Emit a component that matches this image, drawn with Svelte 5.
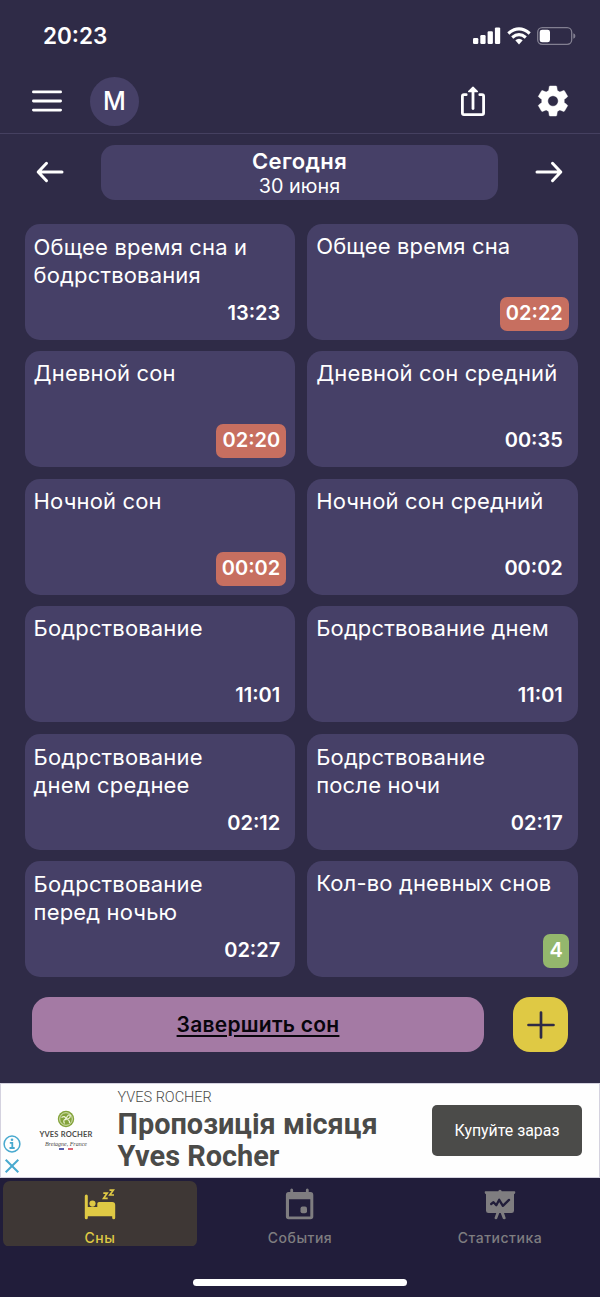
<!-- Daily sleep summary: date switcher, stat cards, actions, ad banner and tab bar. -->
<script lang="ts">
  type Stat = { label: string; value: string; tone?: "bad" | "good" };

  const stats: Stat[] = [
    { label: "Общее время сна и\nбодрствования", value: "13:23" },
    { label: "Общее время сна", value: "02:22", tone: "bad" },
    { label: "Дневной сон", value: "02:20", tone: "bad" },
    { label: "Дневной сон средний", value: "00:35" },
    { label: "Ночной сон", value: "00:02", tone: "bad" },
    { label: "Ночной сон средний", value: "00:02" },
    { label: "Бодрствование", value: "11:01" },
    { label: "Бодрствование днем", value: "11:01" },
    { label: "Бодрствование\nднем среднее", value: "02:12" },
    { label: "Бодрствование\nпосле ночи", value: "02:17" },
    { label: "Бодрствование\nперед ночью", value: "02:27" },
    { label: "Кол-во дневных снов", value: "4", tone: "good" },
  ];

  const tabs = [
    { id: "sleep", label: "Сны" },
    { id: "events", label: "События" },
    { id: "stats", label: "Статистика" },
  ];

  let active = $state("sleep");
</script>

<div class="screen">
  <div class="status">
    <span class="clock">20:23</span>
    <div class="indicators">
      <svg width="28" height="18" viewBox="0 0 28 18" fill="#fff">
        <rect x="0" y="11" width="5.3" height="6" rx="1.2" />
        <rect x="7.3" y="8" width="5.3" height="9" rx="1.2" />
        <rect x="14.6" y="4.3" width="5.3" height="12.7" rx="1.2" />
        <rect x="21.9" y="0.4" width="5.3" height="16.6" rx="1.2" />
      </svg>
      <svg class="wifi" width="24" height="18" viewBox="0 0 24 18" fill="none" stroke="#fff" stroke-width="3.2">
        <path d="M1.3 6.4Q12-2.5 22.7 6.4" />
        <path d="M5.2 10.5Q12 4.8 18.8 10.5" />
        <path d="M8.3 13.3Q12 10.3 15.7 13.3L12 17.4Z" fill="#fff" stroke="none" />
      </svg>
      <svg class="battery" width="39" height="18" viewBox="0 0 39 18">
        <rect x="0.7" y="0.7" width="34" height="16.6" rx="4.5" fill="none" stroke="#827f91" stroke-width="1.3" />
        <rect x="2.7" y="2.7" width="10.3" height="12.6" rx="2.4" fill="#fff" />
        <path d="M36.3 6.2Q38.4 7 38.4 9T36.3 11.8Z" fill="#827f91" />
      </svg>
    </div>
  </div>

  <header>
    <button class="icon menu" aria-label="Меню">
      <svg width="30" height="22" viewBox="0 0 30 22" stroke="#fff" stroke-width="2.8" stroke-linecap="round">
        <path d="M1.4 1.9H28.6M1.4 11H28.6M1.4 20.1H28.6" />
      </svg>
    </button>
    <div class="avatar">М</div>
    <button class="icon share" aria-label="Поделиться">
      <svg width="26" height="32" viewBox="0 0 26 32" fill="none" stroke="#fff" stroke-width="2.8" stroke-linecap="round" stroke-linejoin="round">
        <path d="M6.2 9.7H4Q2.4 9.7 2.4 11.3V28Q2.4 29.6 4 29.6H22Q23.6 29.6 23.6 28V11.3Q23.6 9.7 22 9.7H19.8" />
        <path d="M13 23.5V4" />
        <path d="M13 2.2 17.3 6.5H8.7Z" fill="#fff" stroke-width="1.5" />
      </svg>
    </button>
    <button class="icon gear" aria-label="Настройки">
      <svg width="36" height="36" viewBox="0 0 24 24" fill="#fff" stroke="#fff" stroke-width="0.3" stroke-linejoin="round">
        <path d="M12 15.5A3.5 3.5 0 0 1 8.5 12A3.5 3.5 0 0 1 12 8.5A3.5 3.5 0 0 1 15.5 12A3.5 3.5 0 0 1 12 15.5M19.43 12.97C19.47 12.65 19.5 12.33 19.5 12C19.5 11.67 19.47 11.34 19.43 11L21.54 9.37C21.73 9.22 21.78 8.95 21.66 8.73L19.66 5.27C19.54 5.05 19.27 4.96 19.05 5.05L16.56 6.05C16.04 5.66 15.5 5.32 14.87 5.07L14.5 2.42C14.46 2.18 14.25 2 14 2H10C9.75 2 9.54 2.18 9.5 2.42L9.13 5.07C8.5 5.32 7.96 5.66 7.44 6.05L4.95 5.05C4.73 4.96 4.46 5.05 4.34 5.27L2.34 8.73C2.21 8.95 2.27 9.22 2.46 9.37L4.57 11C4.53 11.34 4.5 11.67 4.5 12C4.5 12.33 4.53 12.65 4.57 12.97L2.46 14.63C2.27 14.78 2.21 15.05 2.34 15.27L4.34 18.73C4.46 18.95 4.73 19.03 4.95 18.95L7.44 17.94C7.96 18.34 8.5 18.68 9.13 18.93L9.5 21.58C9.54 21.82 9.75 22 10 22H14C14.25 22 14.46 21.82 14.5 21.58L14.87 18.93C15.5 18.67 16.04 18.34 16.56 17.94L19.05 18.95C19.27 19.03 19.54 18.95 19.66 18.73L21.66 15.27C21.78 15.05 21.73 14.78 21.54 14.63Z" />
      </svg>
    </button>
  </header>

  <div class="dates">
    <button class="icon" aria-label="Предыдущий день">
      <svg width="28" height="22" viewBox="0 0 28 22" fill="none" stroke="#fff" stroke-width="3" stroke-linecap="round" stroke-linejoin="round">
        <path d="M26 11H2.2M10.5 2.3 2.2 11l8.3 8.7" />
      </svg>
    </button>
    <button class="today">
      <strong>Сегодня</strong>
      <span>30 июня</span>
    </button>
    <button class="icon" aria-label="Следующий день">
      <svg width="28" height="22" viewBox="0 0 28 22" fill="none" stroke="#fff" stroke-width="3" stroke-linecap="round" stroke-linejoin="round">
        <path d="M2 11H25.8M17.5 2.3 25.8 11l-8.3 8.7" />
      </svg>
    </button>
  </div>

  <main>
    {#each stats as stat}
      <section class="card" class:tall={stat.label.includes("\n")}>
        <h2>{stat.label}</h2>
        <span class="value {stat.tone ?? ''}">{stat.value}</span>
      </section>
    {/each}
  </main>

  <div class="actions">
    <button class="finish">Завершить сон</button>
    <button class="add" aria-label="Добавить">
      <svg width="28" height="28" viewBox="0 0 28 28" stroke="#2f2b46" stroke-width="2.7" stroke-linecap="round">
        <path d="M14 1.5V26.5M1.5 14H26.5" />
      </svg>
    </button>
  </div>

  <aside>
    <div class="ad-marks">
      <svg width="18" height="18" viewBox="0 0 18 18" fill="none" stroke="#48a9cf">
        <circle cx="9" cy="9" r="7.9" stroke-width="1.5" />
        <path d="M6.8 7.8H9.3V12.8M6.5 13H11.7" stroke-width="1.8" />
        <circle cx="9" cy="4.7" r="1.3" fill="#48a9cf" stroke="none" />
      </svg>
      <svg width="18" height="18" viewBox="0 0 18 18" stroke="#48a9cf" stroke-width="2">
        <path d="M2.7 2.7 15.3 15.3M15.3 2.7 2.7 15.3" />
      </svg>
    </div>
    <div class="brand">
      <svg width="18" height="18" viewBox="0 0 18 18" fill="none">
        <circle cx="9" cy="9" r="8.2" fill="#83a33a" />
        <circle cx="9" cy="9" r="6.3" stroke="#edf2d8" stroke-width="0.8" />
        <path d="M4.5 7.5Q8 5 9 9Q11 3.5 13.3 5.5Q13.5 9 9 9M9 9Q5.5 10 7.5 13.5M9 9Q13 10 12.5 13" stroke="#edf2d8" stroke-width="1.2" />
      </svg>
      <span class="brand-name">YVES ROCHER</span>
      <span class="brand-place">Bretagne, France</span>
      <span class="flag"><i></i><i></i></span>
    </div>
    <div class="ad-copy">
      <span>YVES ROCHER</span>
      <strong>Пропозиція місяця<br />Yves Rocher</strong>
    </div>
    <button class="buy">Купуйте зараз</button>
  </aside>

  <nav>
    {#each tabs as tab}
      <button class="tab" class:active={active === tab.id} onclick={() => (active = tab.id)}>
        {#if tab.id === "sleep"}
          <svg width="32" height="32" viewBox="0 0 32 32" fill="currentColor">
            <path d="M0.8 7Q0.8 5.5 2.3 5.5T3.8 7V18H13.3V14.6Q13.3 13 15 13H28.2Q31.2 13 31.2 16V28.7Q31.2 30.2 29.7 30.2T28.2 28.7V27.3H3.8V28.7Q3.8 30.2 2.3 30.2T0.8 28.7Z" />
            <circle cx="8.5" cy="14.6" r="3.1" />
            <path d="M19.3 4.1H23.2L19.6 9.3H23.7M25.5 1.2H29.3L25.8 6H30" fill="none" stroke="currentColor" stroke-width="1.7" />
          </svg>
        {:else if tab.id === "events"}
          <svg width="32" height="32" viewBox="0 0 32 32" fill="currentColor">
            <path fill-rule="evenodd" d="M7.7 -0.5Q9.1 -0.5 9.1 1V3H21.9V1Q21.9 -0.5 23.3 -0.5T24.7 1V3H26.5Q29.3 3 29.3 6V27.5Q29.3 30.3 26.5 30.3H4.6Q1.9 30.3 1.9 27.5V6Q1.9 3 4.6 3H6.3V1Q6.3 -0.5 7.7 -0.5ZM5 10.3V27.5H26.3V10.3Z" />
            <rect x="16.5" y="17.5" width="6.5" height="6.8" rx="2" />
          </svg>
        {:else}
          <svg width="32" height="32" viewBox="0 0 32 32" fill="currentColor">
            <path d="M1.5 2.3H14.3Q14.5 0.7 16 0.7T17.7 2.3H30.5Q31.3 2.3 31.3 3.6T30 5.2V21.7Q30 24 27.5 24H20L21.7 29Q21.7 30.3 20.3 30.3T18.8 29.5L16.7 24H15.3L13.2 29.5Q12.9 30.5 11.7 30.3T10.5 29L12.3 24H4.5Q2 24 2 21.7V5.2Q0.7 5 0.7 3.6T1.5 2.3Z" />
            <path class="cut" d="M7.2 15 9.5 13.2 12.3 16.2 15.2 10.8 18.9 16.8 25 10.9" fill="none" stroke-width="2.3" stroke-linecap="round" stroke-linejoin="round" />
          </svg>
        {/if}
        <span>{tab.label}</span>
      </button>
    {/each}
  </nav>
  <div class="home"><span></span></div>
</div>

<style>
  :global(body) {
    margin: 0;
    background: #211d3a;
  }
  .screen {
    width: 600px;
    height: 1297px;
    display: flex;
    flex-direction: column;
    overflow: hidden;
    background: #2f2b47;
    color: #fff;
    font-family: Inter, "Liberation Sans", sans-serif;
  }
  button {
    font: inherit;
    color: inherit;
    border: 0;
    margin: 0;
    padding: 0;
    background: none;
  }
  svg {
    display: block;
    flex: none;
    overflow: visible;
  }
  .status {
    height: 68px;
    box-sizing: border-box;
    padding: 3px 24.5px 0 43px;
    display: flex;
    align-items: center;
    justify-content: space-between;
  }
  .clock {
    font-size: 22.5px;
    font-weight: 600;
  }
  .indicators {
    display: flex;
    align-items: center;
  }
  .wifi,
  .battery {
    margin-left: 6px;
  }
  header {
    height: 66px;
    box-sizing: border-box;
    border-bottom: 1px solid #454060;
    padding: 1px 29px 0 32px;
    display: flex;
    align-items: center;
  }
  .avatar {
    width: 49px;
    height: 49px;
    margin-left: 28px;
    border-radius: 50%;
    background: #464067;
    font-size: 25px;
    font-weight: 500;
    line-height: 49px;
    text-align: center;
  }
  .share {
    margin-left: auto;
  }
  .gear {
    margin-left: 49px;
  }
  .dates {
    height: 55px;
    padding: 11px 37px 0 36px;
    display: flex;
    align-items: center;
    justify-content: space-between;
  }
  .dates .icon {
    padding-bottom: 2px;
  }
  .today {
    width: 397px;
    height: 55px;
    border-radius: 14px;
    background: #464067;
    display: flex;
    flex-direction: column;
    align-items: center;
    justify-content: center;
  }
  .today strong {
    padding-top: 1px;
    font-size: 22px;
    font-weight: 600;
    line-height: 26px;
    letter-spacing: 0.4px;
  }
  .today span {
    font-size: 19.8px;
    line-height: 25px;
  }
  main {
    padding: 24px 22px 0 24.6px;
    display: grid;
    grid-template-columns: 1fr 1fr;
    grid-auto-rows: 115.7px;
    gap: 11.8px;
  }
  .card {
    box-sizing: border-box;
    padding: 9px 9px 9px;
    border-radius: 15px;
    background: #464067;
    display: flex;
    flex-direction: column;
    justify-content: space-between;
  }
  .card.tall {
    padding-top: 10px;
  }
  h2 {
    margin: 0;
    font-size: 22px;
    font-weight: 400;
    line-height: 27.8px;
    letter-spacing: 0.15px;
    white-space: pre;
  }
  .value {
    align-self: flex-end;
    height: 34px;
    padding: 0 6.2px;
    border-radius: 7px;
    font-size: 20px;
    font-weight: 600;
    line-height: 33.6px;
  }
  .bad {
    background: #c76f60;
  }
  .good {
    background: #94b76d;
  }
  .actions {
    padding: 20px 32px 0;
    display: flex;
    justify-content: space-between;
  }
  .finish {
    width: 452px;
    height: 55px;
    border-radius: 17px;
    background: #a47aa4;
    color: #08050c;
    font-size: 21px;
    font-weight: 600;
    letter-spacing: 0.25px;
    text-decoration: underline;
    text-decoration-thickness: 2px;
    text-underline-offset: 3px;
  }
  .add {
    width: 55px;
    height: 55px;
    border-radius: 17px;
    background: #dfc944;
    display: grid;
    place-items: center;
  }
  aside {
    height: 95px;
    margin-top: auto;
    box-sizing: border-box;
    border: 1px solid #d4d2df;
    background: #fefefe;
    color: #4b4b49;
    font-family: Roboto, "Liberation Sans", sans-serif;
    display: flex;
  }
  .ad-marks {
    width: 22px;
    padding: 0 0 2px 2px;
    display: flex;
    flex-direction: column;
    justify-content: flex-end;
    gap: 4px;
  }
  .brand {
    width: 82px;
    padding-top: 26px;
    display: flex;
    flex-direction: column;
    align-items: center;
  }
  .brand-name {
    margin-top: 1px;
    font: 700 7.5px/11px Lato, sans-serif;
    letter-spacing: 0.2px;
    white-space: nowrap;
  }
  .brand-place {
    font: italic 6px/8px "Liberation Serif", serif;
  }
  .flag {
    display: flex;
    gap: 4px;
  }
  .flag i {
    width: 5px;
    height: 1.5px;
    background: #5a5fae;
  }
  .flag i + i {
    background: #df6673;
  }
  .ad-copy {
    padding: 5px 0 0 10.5px;
    display: flex;
    flex-direction: column;
    white-space: nowrap;
  }
  .ad-copy span {
    font-size: 14.5px;
    font-weight: 300;
    line-height: 18px;
  }
  .ad-copy strong {
    font-size: 28.9px;
    font-weight: 700;
    line-height: 32px;
    padding-top: 1px;
  }
  .buy {
    width: 150px;
    height: 51px;
    margin: 21px 17px 0 auto;
    border-radius: 5px;
    background: #4b4b49;
    color: #fff;
    font-size: 15.9px;
  }
  nav {
    height: 68px;
    box-sizing: border-box;
    padding: 3px 3px 0;
    background: #211d3a;
    display: grid;
    grid-template-columns: repeat(3, 194px);
    justify-content: space-between;
  }
  .tab {
    padding-top: 8px;
    border-radius: 7px;
    color: #7f7d80;
    display: flex;
    flex-direction: column;
    align-items: center;
  }
  .tab.active {
    background: #3e3735;
    color: #dfc944;
  }
  .tab span {
    margin-top: 8px;
    font-size: 14px;
    font-weight: 500;
    line-height: 18px;
    letter-spacing: 0.5px;
  }
  .cut {
    stroke: #211d3a;
  }
  .home {
    height: 51px;
    background: #211d3a;
    display: flex;
    justify-content: center;
    align-items: flex-end;
  }
  .home span {
    width: 214px;
    height: 7px;
    margin-bottom: 11px;
    border-radius: 4px;
    background: #fff;
  }
</style>
